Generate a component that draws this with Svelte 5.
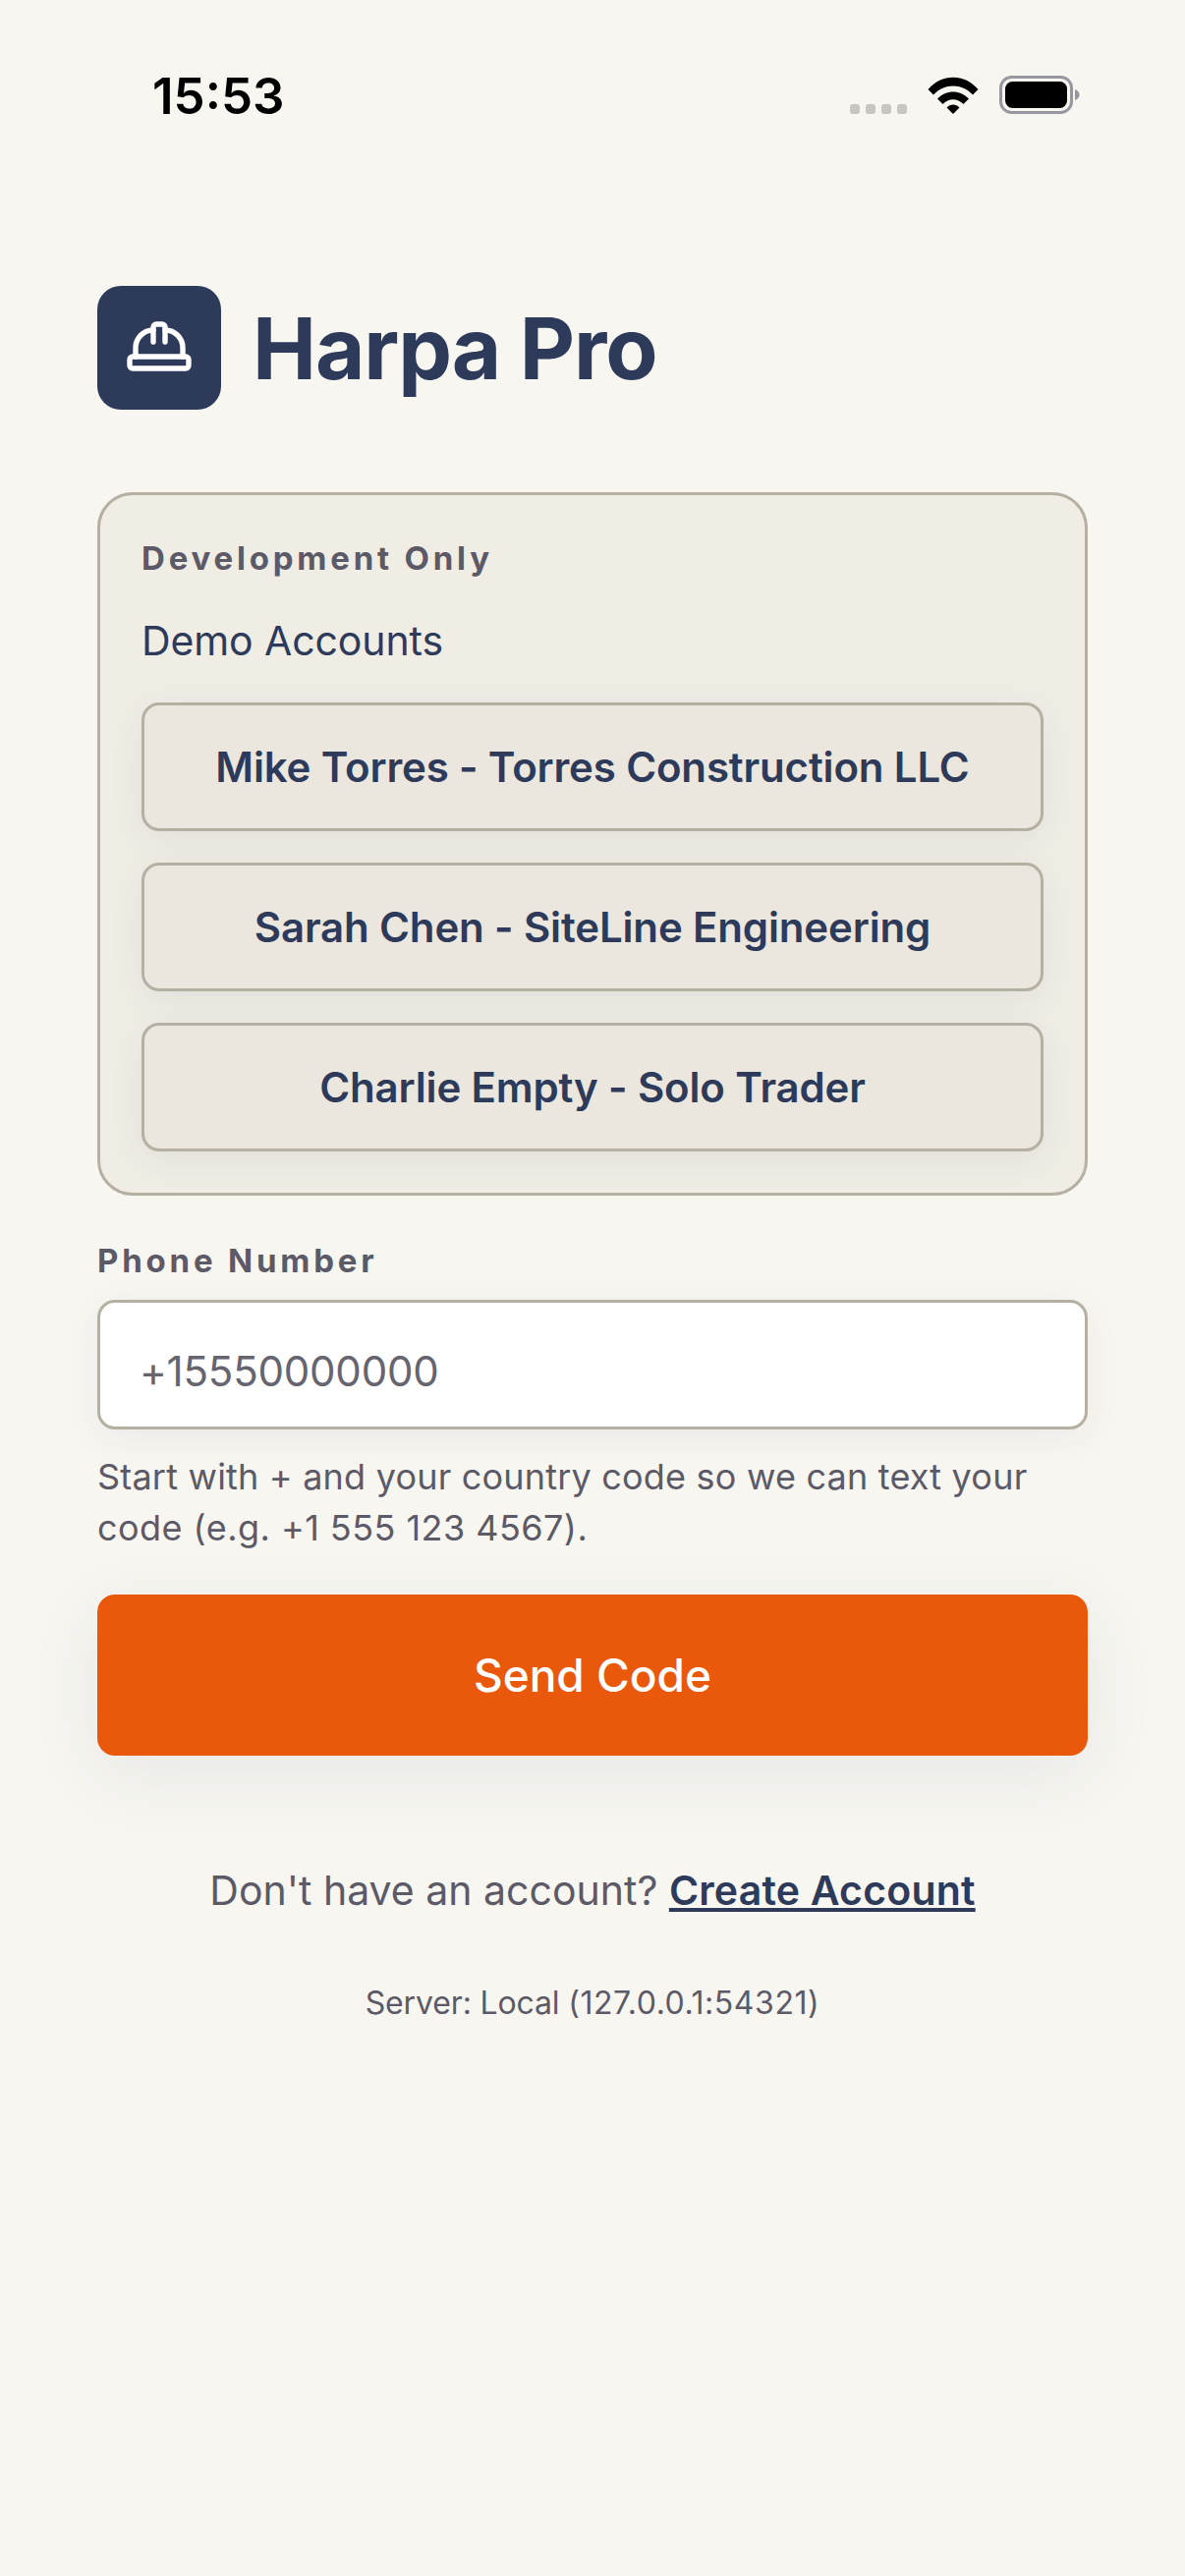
<script>
	const demoAccounts = [
		'Mike Torres - Torres Construction LLC',
		'Sarah Chen - SiteLine Engineering',
		'Charlie Empty - Solo Trader'
	];
</script>

<div class="screen">
	<header class="status">
		<span class="time">15:53</span>
		<div class="indicators">
			<div class="dots"><i></i><i></i><i></i><i></i></div>
			<svg class="wifi" viewBox="0 0 52 38" width="52" height="38">
				<path d="M0.5 13 C14 -3.5 38 -3.5 51.5 13 L46 18.5 C35 6.5 17 6.5 6 18.5 Z" />
				<path d="M10 22.5 C19 13 33 13 42 22.5 L36.5 28 C30.5 21.5 21.5 21.5 15.500 28 Z" />
				<path d="M19.500 31.500 C23 27.500 29 27.500 32.500 31.500 L26 38 Z" />
			</svg>
			<svg class="battery" viewBox="0 0 82 40" width="82" height="40">
				<rect x="1.500" y="1.500" width="72" height="36" rx="11" fill="none" stroke="#98969e" stroke-width="3" />
				<rect x="6" y="6" width="63" height="27" rx="7.500" fill="#000" />
				<path d="M77 14 C80 15 81.500 17 81.500 19.500 C81.500 22 80 24 77 25 Z" fill="#98969e" />
			</svg>
		</div>
	</header>

	<main class="content">
		<div class="brand">
			<div class="logo">
				<svg viewBox="0 0 24 24" width="72" height="72" fill="none" stroke="#fff" stroke-width="1.8" stroke-linecap="round" stroke-linejoin="round">
					<path d="M10 10V5a1 1 0 0 1 1-1h2a1 1 0 0 1 1 1v5" />
					<path d="M14 6a6 6 0 0 1 6 6v3" />
					<path d="M4 15v-3a6 6 0 0 1 6-6" />
					<rect x="2" y="15" width="20" height="4" rx="1" />
				</svg>
			</div>
			<h1>Harpa Pro</h1>
		</div>

		<section class="dev-card">
			<div class="label">Development Only</div>
			<div class="demo-title">Demo Accounts</div>
			<div class="demo-list">
				{#each demoAccounts as account}
					<button class="demo-btn">{account}</button>
				{/each}
			</div>
		</section>

		<label class="label phone-label" for="phone">Phone Number</label>
		<input id="phone" class="phone" placeholder="+15550000000" />
		<div class="hint">
			<p>Start with + and your country code so we can text your</p>
			<p class="example">code (e.g. +1 555 123 4567).</p>
		</div>

		<button class="send">Send Code</button>

		<p class="signup">Don't have an account? <a href="#create">Create Account</a></p>
		<p class="server">Server: Local <span class="num">(127.0.0.1:54321)</span></p>
	</main>
</div>

<style>
	:global(body) {
		margin: 0;
		background: #f7f6f1;
	}

	.screen {
		height: 2622px;
		background: #f7f6f1;
		font-family: Inter, 'Liberation Sans', sans-serif;
		overflow: hidden;
	}

	.status {
		display: flex;
		justify-content: space-between;
		align-items: center;
		height: 194px;
		box-sizing: border-box;
		padding: 0 12px 0 155px;
	}

	.time {
		font-size: 51px;
		font-weight: 600;
		color: #000;
	}

	.indicators {
		display: flex;
		align-items: center;
		margin-right: 95px;
	}

	.dots {
		display: flex;
		gap: 6px;
		margin: 28px 21px 0 0;
	}

	.dots i {
		width: 10px;
		height: 10px;
		border-radius: 3px;
		background: #c8c6c1;
	}

	.wifi {
		margin-right: 21px;
	}

	.content {
		padding: 97px 99px 0;
	}

	.brand {
		display: flex;
		align-items: center;
		gap: 32px;
	}

	.logo {
		display: flex;
		align-items: center;
		justify-content: center;
		width: 126px;
		height: 126px;
		border-radius: 24px;
		background: #2d3a5a;
	}

	h1 {
		margin: 0;
		font-size: 87px;
		font-weight: 700;
		color: #2d3a5a;
		letter-spacing: -1.1px;
	}

	.dev-card {
		margin-top: 84px;
		padding: 40px 42px 42px;
		border: 3px solid #b5b0a2;
		border-radius: 36px;
		background: #f0ede5;
	}

	.label {
		display: block;
		font-size: 33px;
		font-weight: 700;
		letter-spacing: 3.8px;
		line-height: 48px;
		color: #5d5a68;
	}

	.demo-title {
		margin-top: 30px;
		font-size: 41px;
		letter-spacing: -0.1px;
		line-height: 60px;
		color: #2d3a5a;
	}

	.demo-list {
		display: flex;
		flex-direction: column;
		gap: 32px;
		margin-top: 33px;
	}

	.demo-btn {
		height: 131px;
		border: 3px solid #b5b0a2;
		border-radius: 18px;
		background: #ebe6de;
		box-shadow: 0 9px 36px rgba(45, 58, 90, 0.07);
		font-family: inherit;
		font-size: 42px;
		font-weight: 580;
		letter-spacing: -0.15px;
		color: #2d3a5a;
	}

	.phone-label {
		margin-top: 42px;
	}

	.phone {
		display: block;
		width: 100%;
		height: 132px;
		box-sizing: border-box;
		margin-top: 16px;
		padding: 12px 40px 0;
		border: 3px solid #b5b0a2;
		border-radius: 18px;
		background: #fff;
		box-shadow: 0 9px 36px rgba(45, 58, 90, 0.06);
		font-family: inherit;
		font-size: 42px;
		letter-spacing: -0.2px;
		outline: none;
	}

	.phone::placeholder {
		color: #66646f;
		opacity: 1;
	}

	.hint {
		margin-top: 22px;
		font-size: 36px;
		letter-spacing: 0.2px;
		line-height: 52px;
		color: #5d5a68;
	}

	.hint p {
		margin: 0;
	}

	.hint .example {
		letter-spacing: 0.45px;
	}

	.send {
		display: block;
		width: 100%;
		height: 164px;
		margin-top: 42px;
		border: none;
		border-radius: 18px;
		background: #ea580c;
		box-shadow: 0 18px 72px rgba(45, 58, 90, 0.08);
		font-family: inherit;
		font-size: 46px;
		font-weight: 500;
		color: #fff;
	}

	.signup {
		margin: 109px 0 0;
		text-align: center;
		font-size: 41px;
		line-height: 56px;
		color: #5d5a68;
	}

	.signup a {
		font-weight: 600;
		letter-spacing: 0.2px;
		color: #2d3a5a;
	}

	.server {
		margin: 65px 0 0;
		text-align: center;
		font-size: 32px;
		letter-spacing: -0.15px;
		line-height: 44px;
		color: #5d5a68;
	}

	.server .num {
		letter-spacing: 0.55px;
	}
</style>
